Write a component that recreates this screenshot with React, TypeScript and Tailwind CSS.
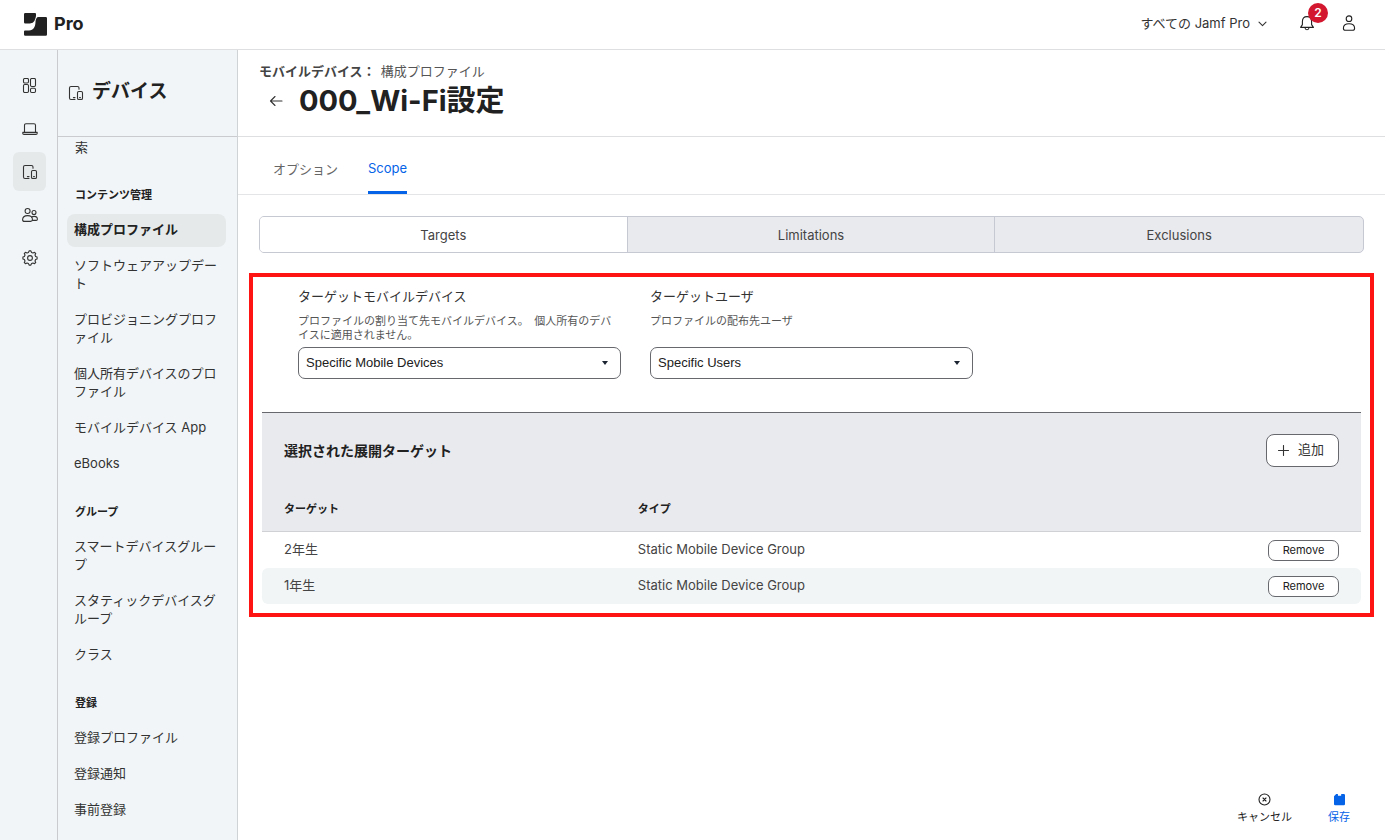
import type { ReactNode } from "react";

type IconProps = { className?: string; children: ReactNode; box?: string };

function Icon({ className = "size-4", children, box = "0 0 16 16" }: IconProps) {
  return (
    <svg
      aria-hidden="true"
      viewBox={box}
      fill="none"
      stroke="currentColor"
      strokeWidth="1.1"
      strokeLinecap="round"
      strokeLinejoin="round"
      className={className}
    >
      {children}
    </svg>
  );
}

const DashboardIcon = () => (
  <Icon>
    <rect x="1.5" y=".5" width="5" height="4.5" rx="1.2" />
    <rect x="8.5" y=".5" width="5" height="8" rx="1.2" />
    <rect x="1.5" y="6.5" width="5" height="8" rx="1.2" />
    <rect x="8.5" y="10.3" width="5" height="4.2" rx="1.2" />
  </Icon>
);

const LaptopIcon = () => (
  <Icon>
    <path d="M2.5 11V4.3Q2.5 2.8 4 2.8H12Q13.5 2.8 13.5 4.3V11" />
    <path d="M.8 11.4H15.2V12.2Q15.2 13.4 14 13.4H2Q.8 13.4 .8 12.2Z" />
  </Icon>
);

const DevicesIcon = () => (
  <Icon>
    <path d="M7 14.5H3Q1.5 14.5 1.5 13V3Q1.5 1.5 3 1.5H9.5Q11 1.5 11 3V4.2" />
    <path d="M5.4 12.6H7" />
    <rect x="9.5" y="6.5" width="5" height="8" rx="1.3" />
    <path d="M11.6 12.6H12.4" />
  </Icon>
);

const UsersIcon = () => (
  <Icon>
    <circle cx="5.6" cy="4" r="2.5" />
    <circle cx="12" cy="5.5" r="2" />
    <path d="M.6 12.8Q.6 8.6 5.6 8.6T10.4 12.8Q10.4 14.4 8.6 14.4H2.4Q.6 14.4 .6 12.8Z" />
    <path d="M9.6 10.2Q10.4 9.4 12.1 9.4Q15.4 9.4 15.4 12.2Q15.4 13.4 14.2 13.4H10.6" />
  </Icon>
);

const GearIcon = () => (
  <Icon>
    <circle cx="8" cy="8" r="2.4" />
    <path d="M6.5 2.4 7.1 .9H8.9L9.5 2.4L11 3L12.5 2.3L13.7 3.5L13 5L13.6 6.5L15.1 7.1V8.9L13.6 9.5L13 11L13.7 12.5L12.5 13.7L11 13L9.5 13.6L8.9 15.1H7.1L6.5 13.6L5 13L3.5 13.7L2.3 12.5L3 11L2.4 9.5L.9 8.9V7.1L2.4 6.5L3 5L2.3 3.5L3.5 2.3L5 3Z" />
  </Icon>
);

const rail = [
  { label: "ダッシュボード", icon: <DashboardIcon /> },
  { label: "コンピュータ", icon: <LaptopIcon /> },
  { label: "デバイス", icon: <DevicesIcon />, active: true },
  { label: "ユーザ", icon: <UsersIcon /> },
  { label: "設定", icon: <GearIcon /> },
];

const sections = [
  {
    title: "コンテンツ管理",
    items: [
      "構成プロファイル",
      "ソフトウェアアップデート",
      "プロビジョニングプロファイル",
      "個人所有デバイスのプロファイル",
      "モバイルデバイス App",
      "eBooks",
    ],
  },
  {
    title: "グループ",
    items: ["スマートデバイスグループ", "スタティックデバイスグループ", "クラス"],
  },
  { title: "登録", items: ["登録プロファイル", "登録通知", "事前登録"] },
];

const targets = [
  { name: "2年生", type: "Static Mobile Device Group" },
  { name: "1年生", type: "Static Mobile Device Group" },
];

function TopBar() {
  return (
    <header className="flex h-[50px] shrink-0 items-center border-b border-[#dedfe1] bg-white pr-7 pl-6">
      <svg aria-hidden="true" viewBox="0 0 23 23" className="size-[23px] fill-[#212121]">
        <path d="M0 1.2Q0 0 1.2 0H11Q12 0 12 1V3Q11.8 5.2 10.4 8Q9.2 10.4 6 10.4H1.2Q0 10.4 0 9.2Z" />
        <path d="M14.5 4H21.8Q23 4 23 5.2V21.6Q23 22.8 21.8 22.8H1.2Q0 22.8 0 21.6V18.6Q0 17.5 1 17.5H5C9.6 17.2 11.3 14 11.5 9C11.6 6 12.6 4 14.5 4Z" />
      </svg>
      <span className="ml-[7px] pb-0.5 text-lg font-bold text-[#212121]">Pro</span>
      <div className="ml-auto flex items-center pb-[3px] text-[#212121]">
        <button type="button" className="flex items-center gap-2 text-[#333]">
          すべての Jamf Pro
          <Icon className="size-[9px]" box="0 0 9 9">
            <path d="M1 3.2 4.5 6.6 8 3.2" />
          </Icon>
        </button>
        <button type="button" aria-label="通知" className="relative ml-8">
          <Icon>
            <path d="M1.6 12.4H14.4L12.6 9.6V6.6Q12.6 1.6 8 1.6T3.4 6.6V9.6Z" />
            <path d="M6 12.8Q6.2 14.8 8 14.8T10 12.8" />
          </Icon>
          <span className="absolute -top-3 left-[9px] flex size-5 items-center justify-center rounded-full bg-[#d3172e] text-xs font-semibold text-white">
            2
          </span>
        </button>
        <button type="button" aria-label="アカウント" className="ml-[26px]">
          <Icon>
            <circle cx="8" cy="3.7" r="2.8" />
            <path d="M2.4 13.2Q2.4 8.8 8 8.8T13.6 13.2Q13.6 15.3 11.6 15.3H4.4Q2.4 15.3 2.4 13.2Z" />
          </Icon>
        </button>
      </div>
    </header>
  );
}

function Rail() {
  return (
    <nav aria-label="メイン" className="flex w-[58px] shrink-0 flex-col items-center gap-1 border-r border-[#c9cbce] bg-[#f1f5f7] pt-4 pr-px pl-[3px]">
      {rail.map((r) => (
        <a
          key={r.label}
          href="#"
          aria-label={r.label}
          className={
            r.active
              ? "flex h-[39px] w-[33px] items-center justify-center rounded-md bg-[#e5e9ea] pt-px pl-px"
              : "flex h-[39px] w-[33px] items-center justify-center rounded-md pt-px pl-px"
          }
        >
          {r.icon}
        </a>
      ))}
    </nav>
  );
}

function Sidebar() {
  return (
    <aside className="flex w-[180px] shrink-0 flex-col border-r border-[#d0d3d6] bg-[#f1f5f7]">
      <div className="flex h-[87px] shrink-0 items-center gap-2 border-b border-[#c9cbce] pb-0.5 pl-2.5">
        <span className="mt-0.5">
          <DevicesIcon />
        </span>
        <h2 className="text-[19px] font-bold text-[#212121]">デバイス</h2>
      </div>
      <nav aria-label="デバイス" className="min-h-0 flex-1 overflow-hidden pr-[11px] pl-[9px]">
        <a href="#" className="block px-2 pt-px pb-2">
          索
        </a>
        {sections.map((s) => (
          <section key={s.title} className="mt-[22px]">
            <h3 className="mb-2.5 px-2 text-[11px] leading-[18px] font-bold text-[#212121]">{s.title}</h3>
            <ul className="flex flex-col gap-[3px]">
              {s.items.map((item) => (
                <li key={item}>
                  <a
                    href="#"
                    className={
                      item === "構成プロファイル"
                        ? "block rounded-lg bg-[#e5e9ea] pt-1.5 pr-1 pb-[9px] pl-[7px] font-bold text-[#212121]"
                        : "block pt-1.5 pr-1 pb-[9px] pl-[7px]"
                    }
                  >
                    {item}
                  </a>
                </li>
              ))}
            </ul>
          </section>
        ))}
      </nav>
    </aside>
  );
}

type FieldProps = { id: string; label: string; help: string; value: string };

function SelectField({ id, label, help, value }: FieldProps) {
  return (
    <div>
      <label htmlFor={id} className="block leading-5 text-[#333]">
        {label}
      </label>
      <p className="mt-2 min-h-7 text-[11px] leading-[14px] text-[#555]">{help}</p>
      <div className="relative mt-[5px]">
        <select
          id={id}
          defaultValue={value}
          className="h-8 w-full appearance-none rounded-[7px] border border-[#66686e] bg-white pl-[7px] font-['Liberation_Sans','Noto_Sans_CJK_JP',sans-serif] text-[13px] text-[#212121]"
        >
          <option>{value}</option>
        </select>
        <svg aria-hidden="true" viewBox="0 0 6 4" className="pointer-events-none absolute top-[14px] right-[13px] h-1 w-1.5 fill-[#1b2430]">
          <path d="M0 0H6L3 4Z" />
        </svg>
      </div>
    </div>
  );
}

function TargetPanel() {
  return (
    <section className="mx-[11px] mt-5 border-4 border-[#ff1414] px-[9px] py-[9px]">
      <div className="grid grid-cols-3 gap-x-[29px] px-9 pb-[33px]">
        <SelectField
          id="target-devices"
          label="ターゲットモバイルデバイス"
          help="プロファイルの割り当て先モバイルデバイス。　個人所有のデバイスに適用されません。"
          value="Specific Mobile Devices"
        />
        <SelectField id="target-users" label="ターゲットユーザ" help="プロファイルの配布先ユーザ" value="Specific Users" />
      </div>
      <div className="flex items-center justify-between border-t border-[#66686e] bg-[#e9eaee] px-[22px] pt-[21px]">
        <h2 className="text-sm font-bold text-[#212121]">選択された展開ターゲット</h2>
        <button type="button" className="flex h-[33px] items-center gap-[9px] rounded-lg border border-[#66686e] bg-white pr-3.5 pl-[11px] text-[#333]">
          <Icon className="size-[11px]" box="0 0 11 11">
            <path d="M5.5 .5V10.5M.5 5.5H10.5" />
          </Icon>
          <span className="pb-[3px]">追加</span>
        </button>
      </div>
      <table className="w-full border-separate border-spacing-0 text-left text-[#444]">
        <thead className="bg-[#e9eaee] text-[11px] text-[#212121]">
          <tr>
            <th scope="col" className="w-[34.2%] border-b border-[#cfd1d4] pt-[33px] pb-[13px] pl-[22px] font-bold">
              ターゲット
            </th>
            <th scope="col" className="border-b border-[#cfd1d4] pt-[33px] pb-[13px] font-bold">
              タイプ
            </th>
            <td className="border-b border-[#cfd1d4]" />
          </tr>
        </thead>
        <tbody>
          {targets.map((t) => (
            <tr key={t.name} className="h-9 even:bg-[#f1f5f6]">
              <td className="rounded-l-md pb-0.5 pl-[22px]">{t.name}</td>
              <td className="pb-0.5">{t.type}</td>
              <td className="rounded-r-md pr-[22px]">
                <button type="button" className="ml-auto flex h-[21px] w-[71px] items-center justify-center rounded-[7px] border border-[#66686e] bg-white pb-px text-[11px] text-[#212121]">
                  Remove
                </button>
              </td>
            </tr>
          ))}
        </tbody>
      </table>
    </section>
  );
}

function Content() {
  return (
    <main className="flex min-w-0 flex-1 flex-col bg-white">
      <div className="h-[87px] shrink-0 border-b border-[#dedfe1] pt-3 pl-[21px]">
        <p className="text-[#555]">
          <span className="font-bold text-[#444]">モバイルデバイス：</span>
          <a href="#" className="ml-[5px]">
            構成プロファイル
          </a>
        </p>
        <div className="flex items-center gap-4 pl-2.5">
          <button type="button" aria-label="戻る" className="text-[#333]">
            <Icon className="size-[14px]" box="0 0 14 14">
              <path d="M13 7H1.5M6 2.5 1.5 7 6 11.5" />
            </Icon>
          </button>
          <h1 className="text-[29px] leading-[42px] font-bold text-[#212121]">000_Wi-Fi設定</h1>
        </div>
      </div>
      <nav aria-label="タブ" className="flex h-[58px] shrink-0 gap-[30px] border-b border-[#e4e5e7] pl-[35px]">
        <a href="#" className="pt-[23px] text-[#666]">
          オプション
        </a>
        <a href="#" aria-current="page" className="border-b-3 border-[#0563e8] pt-[22px] text-[#0563e8]">
          Scope
        </a>
      </nav>
      <div className="mx-[21px] mt-[21px] grid h-[37px] shrink-0 grid-cols-3 divide-x divide-[#c6c8d2] overflow-hidden rounded-[5px] border border-[#c6c8d2] bg-[#e9eaee] text-[#444]">
        <button type="button" className="bg-white">
          Targets
        </button>
        <button type="button">Limitations</button>
        <button type="button">Exclusions</button>
      </div>
      <TargetPanel />
      <footer className="mt-auto flex justify-end gap-9 pt-4 pr-[35px] pb-4 text-[11px]">
        <button type="button" className="flex flex-col items-center gap-1 text-[#212121]">
          <Icon className="size-[13px]" box="0 0 13 13">
            <circle cx="6.5" cy="6.5" r="5.5" />
            <path d="M5 5 8 8M8 5 5 8" />
          </Icon>
          <span className="leading-[14px]">キャンセル</span>
        </button>
        <button type="button" className="flex flex-col items-center gap-1 text-[#0563e8]">
          <svg aria-hidden="true" viewBox="0 0 13 13" className="size-[13px] fill-current">
            <path d="M3.2 1H4.9V2.2Q4.9 2.8 5.5 2.8H7.6Q8.2 2.8 8.2 2.2V1H10.8Q12 1 12 2.2V11Q12 12.2 10.8 12.2H2.2Q1 12.2 1 11V3.2Z" />
          </svg>
          <span className="leading-[14px]">保存</span>
        </button>
      </footer>
    </main>
  );
}

export default function App() {
  return (
    <div lang="ja" className="flex h-screen flex-col font-['Inter','Noto_Sans_CJK_JP',sans-serif] text-[13px] leading-[18px] text-[#333]">
      <TopBar />
      <div className="flex min-h-0 flex-1">
        <Rail />
        <Sidebar />
        <Content />
      </div>
    </div>
  );
}
